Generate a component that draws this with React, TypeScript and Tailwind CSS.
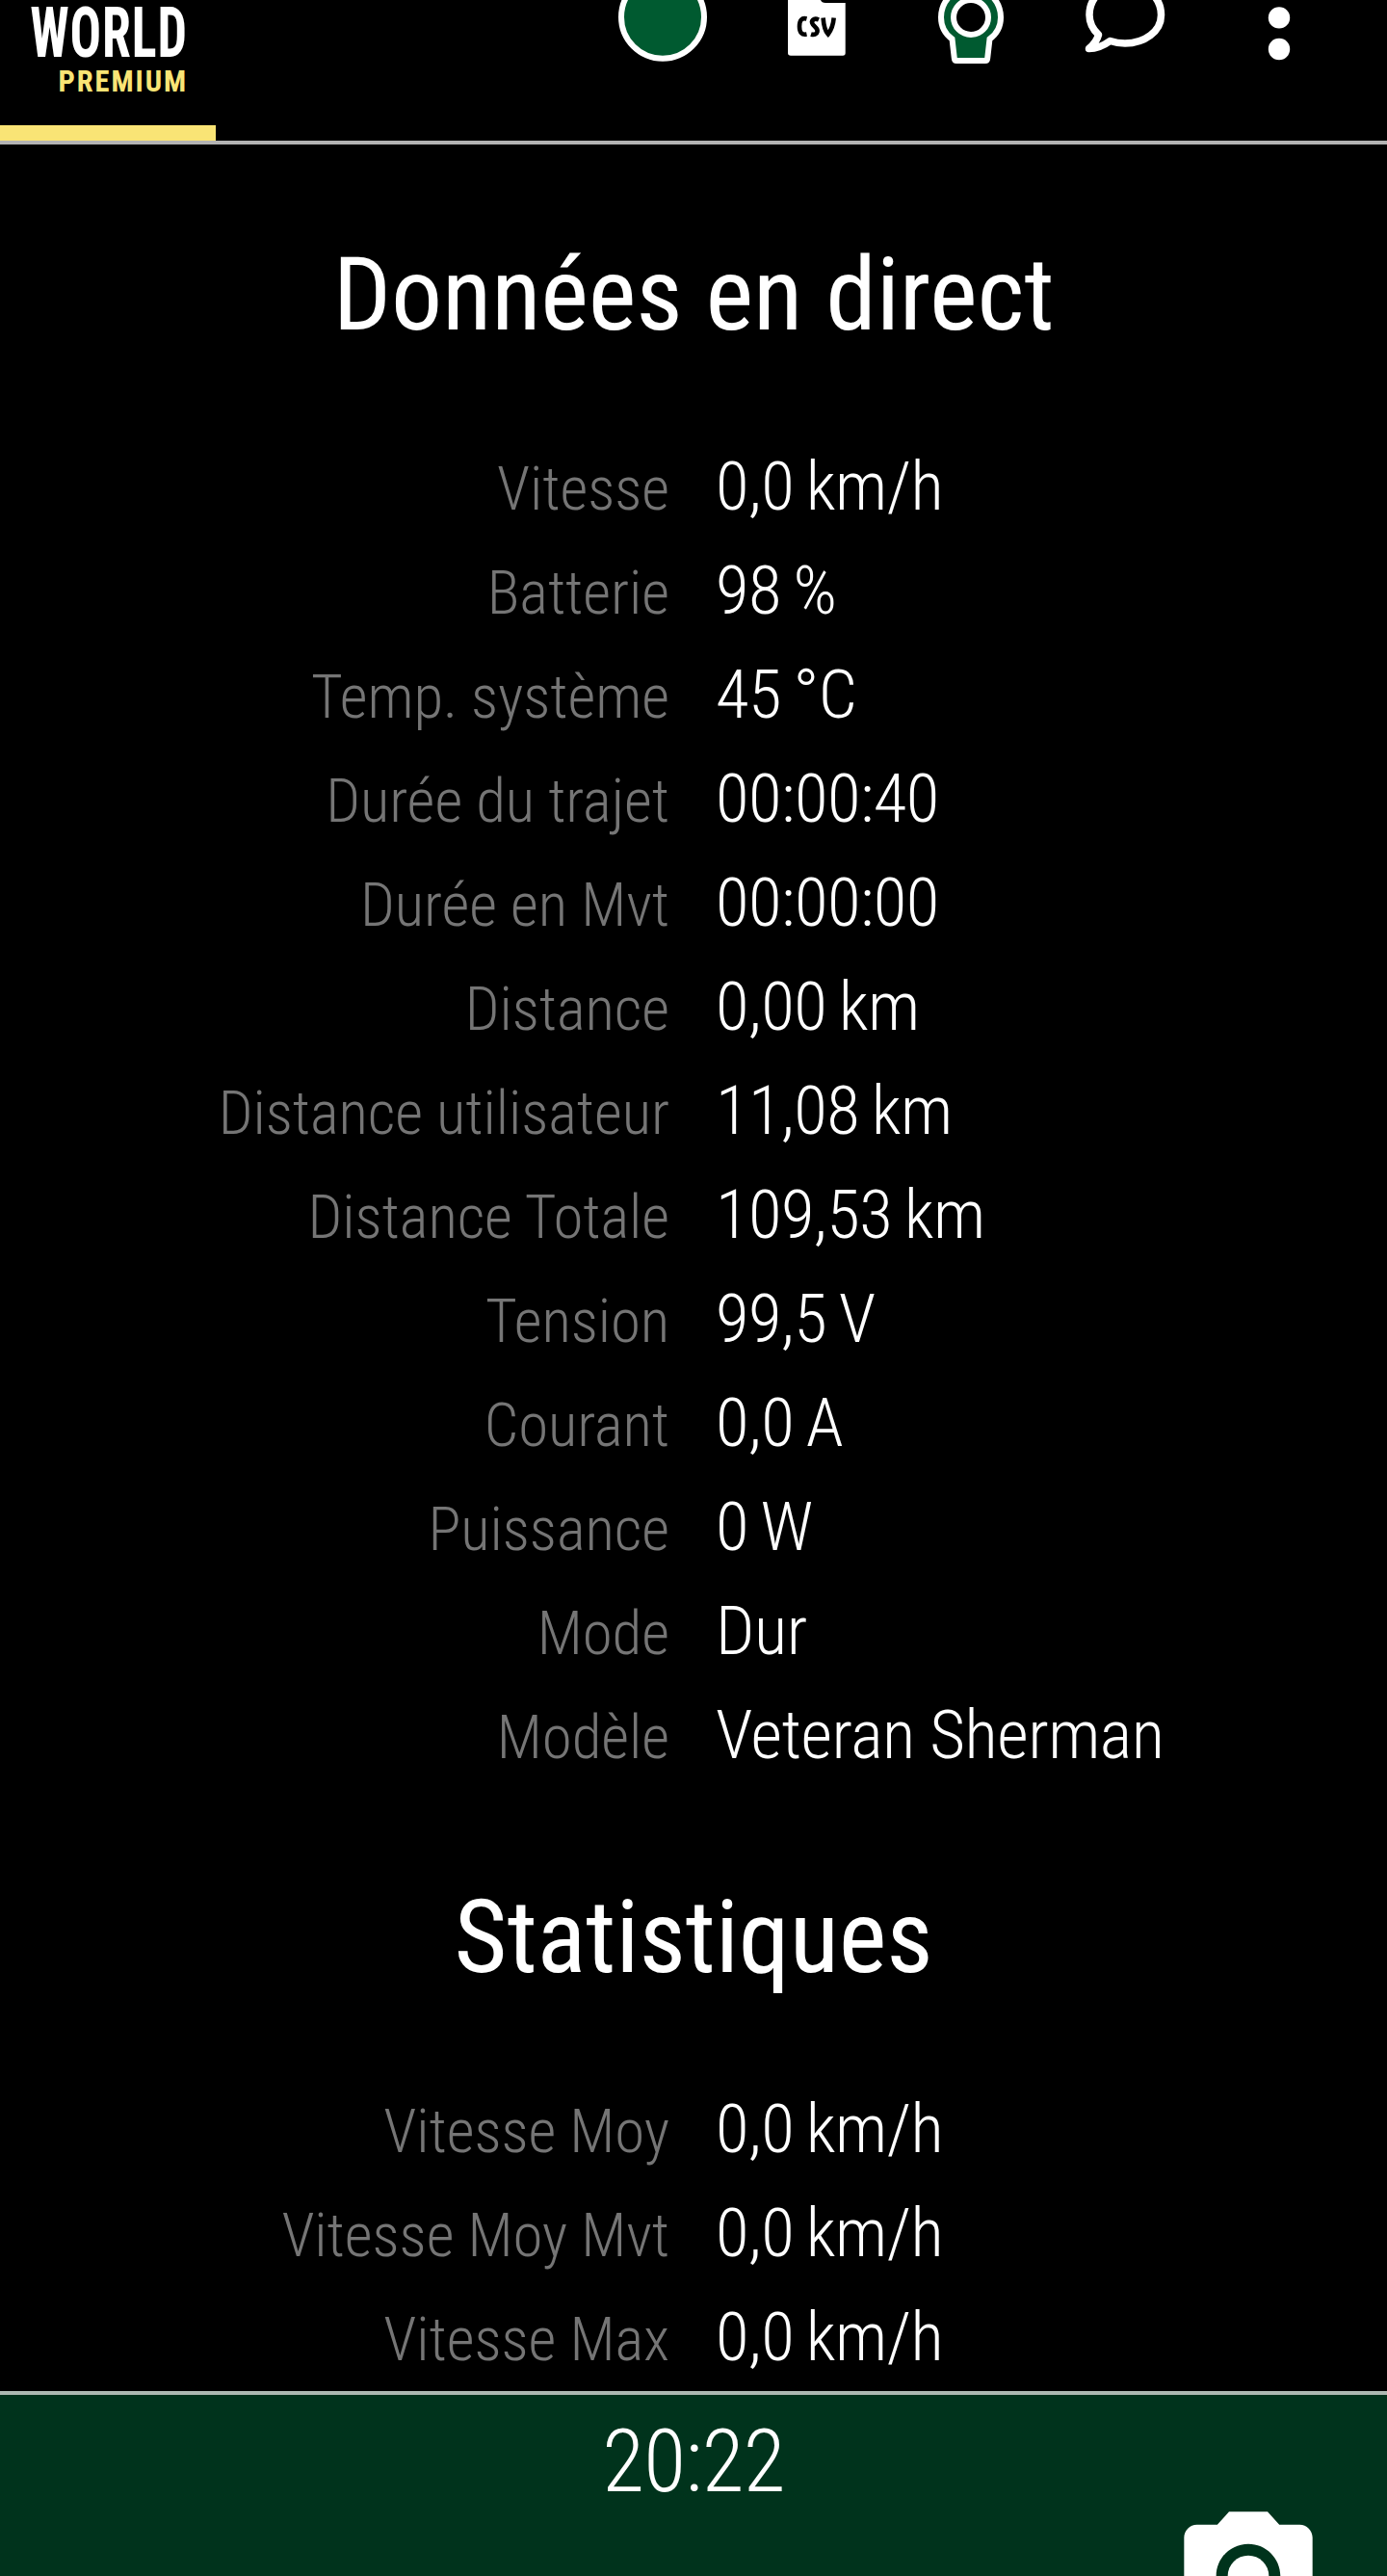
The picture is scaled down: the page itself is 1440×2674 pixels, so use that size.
const live: [string, string][] = [
  ['Vitesse', '0,0 km/h'],
  ['Batterie', '98 %'],
  ['Temp. système', '45 °C'],
  ['Durée du trajet', '00:00:40'],
  ['Durée en Mvt', '00:00:00'],
  ['Distance', '0,00 km'],
  ['Distance utilisateur', '11,08 km'],
  ['Distance Totale', '109,53 km'],
  ['Tension', '99,5 V'],
  ['Courant', '0,0 A'],
  ['Puissance', '0 W'],
  ['Mode', 'Dur'],
  ['Modèle', 'Veteran Sherman'],
];

const stats: [string, string][] = [
  ['Vitesse Moy', '0,0 km/h'],
  ['Vitesse Moy Mvt', '0,0 km/h'],
  ['Vitesse Max', '0,0 km/h'],
];

function Section({ title, rows }: { title: string; rows: [string, string][] }) {
  return (
    <section>
      <h2 className="text-center text-[106px] leading-[124px] font-normal tracking-[-0.2px]">{title}</h2>
      <dl className="mt-[83px]">
        {rows.map(([label, value]) => (
          <div key={label} className="flex h-[108px] items-baseline font-light leading-[108px]">
            <dt className="w-[695px] text-right text-[63px] tracking-[-0.1px] text-[#757575]">{label}</dt>
            <dd
              className={
                /^\d/.test(value)
                  ? 'ml-[48px] text-[71px] tracking-[-0.5px] [word-spacing:-3px]'
                  : 'ml-[48px] text-[71px] tracking-[-0.5px]'
              }
            >
              {value}
            </dd>
          </div>
        ))}
      </dl>
    </section>
  );
}

function Header() {
  return (
    <header className="flex h-[150px] shrink-0 flex-col border-b-4 border-[#b3b3b3]">
      <div className="flex h-[130px] items-start">
        <div className="flex w-[195px] flex-col items-end whitespace-nowrap">
          <span className="mt-[3px] scale-y-[1.35] text-[54px] leading-[64px] font-bold tracking-[0.9px]">WORLD</span>
          <span className="mt-[2px] text-[30.5px] leading-[31px] font-bold tracking-[1.9px] text-[#f9e475]">
            PREMIUM
          </span>
        </div>
        <svg className="ml-[405px] h-[130px] w-[840px]" viewBox="600 0 840 130" fill="none">
          <circle cx="688" cy="17.7" r="43" fill="#005a30" stroke="#fff" strokeWidth="6" />
          <path d="M818 0H852Q853 3 857 3H877.7V55Q877.7 57.7 875 57.7H821Q818 57.7 818 55Z" fill="#fff" />
          <path
            d="M837.5 19.5Q830 17.500 830 27.500Q830 37 837.500 35.500M850 20.500C844.500 18 841.500 22 844 25.500C846 28.500 849.500 29 848.500 33C848 35.500 845 36.500 842 35.500M854.600 18.500Q855.500 31 859.700 35.500Q864.800 29 865.700 18.500"
            stroke="#000"
            strokeWidth="4.600"
          />
          <path
            d="M988.500 40.500C981.500 35.500 977 28 977 18A31 31 0 0 1 1039 18C1039 28 1034.500 35.500 1027.500 40.500L1025.200 60.500Q1025 63 1023 63H993Q991 63 990.800 60.500Z"
            fill="#005a30"
            stroke="#fff"
            strokeWidth="6"
          />
          <circle cx="1008" cy="18" r="18" fill="#000" stroke="#fff" strokeWidth="6" />
          <path
            d="M1140.500 36C1134 30 1131 23 1131 15.500C1131 -4 1148 -17 1168 -17C1188 -17 1205.500 -4 1205.500 15.500C1205.500 33 1188 45 1168 45C1162 45 1157 44 1152.500 42.500C1145 48 1138 50.500 1130.500 50.500C1136 46 1139 42 1140.500 36Z"
            stroke="#fff"
            strokeWidth="7.500"
            strokeLinejoin="round"
          />
          <circle cx="1328" cy="18.400" r="11.200" fill="#fff" />
          <circle cx="1328" cy="51" r="11.200" fill="#fff" />
        </svg>
      </div>
      <div className="h-4 w-[224px] bg-[#f9e475]" />
    </header>
  );
}

export default function App() {
  return (
    <div className="flex h-[2674px] w-[1440px] flex-col overflow-hidden bg-black font-['Roboto_Condensed',Roboto,sans-serif] text-white [font-stretch:75%]">
      <Header />
      <main className="flex h-[2332px] shrink-0 flex-col gap-[94px] overflow-hidden pt-[94px]">
        <Section title="Données en direct" rows={live} />
        <Section title="Statistiques" rows={stats} />
      </main>
      <footer className="relative h-[192px] shrink-0 overflow-hidden border-t-4 border-[#adb9b2] bg-[#00331c]">
        <div className="pt-[17px] text-center text-[90px] leading-[106px] font-light tracking-[-0.7px]">20:22</div>
        <svg className="absolute top-[108px] left-[1216px] size-[160px]" viewBox="0 0 24 24" fill="#fff">
          <path
            fillRule="evenodd"
            d="M9 2L7.170 4H4c-1.100 0-2 .9-2 2v12c0 1.100.9 2 2 2h16c1.100 0 2-.9 2-2V6c0-1.100-.9-2-2-2h-3.170L15 2H9zm3 15c-2.760 0-5-2.240-5-5s2.240-5 5-5 5 2.240 5 5-2.240 5-5 5z"
          />
          <circle cx="12" cy="12" r="3.200" />
        </svg>
      </footer>
    </div>
  );
}
